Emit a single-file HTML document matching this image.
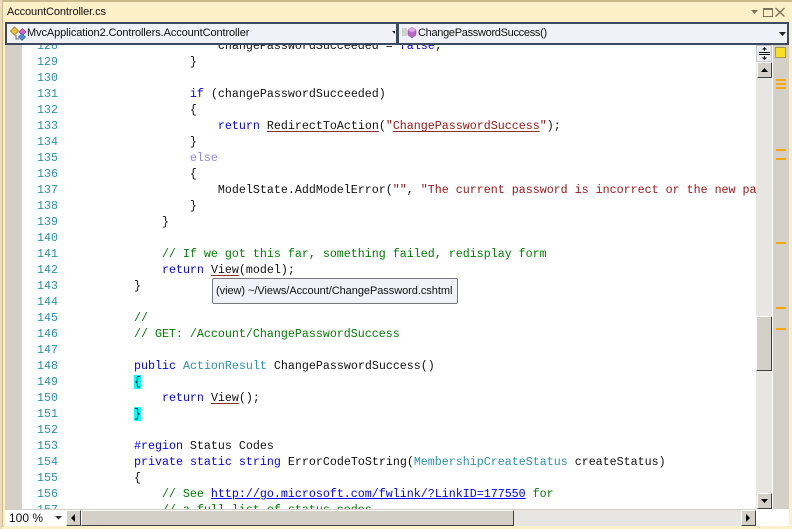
<!DOCTYPE html>
<html><head><meta charset="utf-8">
<style>
html,body{margin:0;padding:0}
body{width:792px;height:529px;position:relative;overflow:hidden;background:#fdf0c9;font-family:"Liberation Sans",sans-serif}
div{position:absolute;box-sizing:border-box}
.ui{font-size:11px;color:#111;white-space:pre;line-height:16px}
#code{left:22px;top:45px;width:734px;height:464px;background:#fff;overflow:hidden}
.l{position:absolute;left:0;height:16px;line-height:16px;white-space:pre;font-family:"Liberation Mono",monospace;font-size:11.67px;color:#111}
.n{left:15px;color:#2b91af}
.c{left:56px}
.k{color:#0000ff}.s{color:#a31515}.g{color:#008000}.t{color:#2b91af}
.d{color:#8a8aee}.u{text-decoration:underline;text-decoration-color:#8a3030;text-underline-offset:2px}.b{background:#00ffff}
.a{color:#0000ff;text-decoration:underline}
.btn{background:#d4d0c8;border:1px solid;border-color:#fff #404040 #404040 #fff}
.m{left:776px;width:10px;height:2px;background:#ffa500}
</style></head><body>
<div style="left:0;top:0;width:792px;height:2px;background:#c9b98e"></div>
<div style="left:0;top:0;width:2px;height:529px;background:#e8dcc0"></div>
<div style="left:2px;top:1px;width:1px;height:526px;background:#d2b98a"></div>
<div class="ui" style="left:7px;top:4px;letter-spacing:-.1px">AccountController.cs</div>

<svg style="position:absolute;left:750px;top:3px" width="42" height="18">
<path d="M1 7h7l-3.500 4z" fill="#7b7257"/>
<rect x="13.500" y="5.500" width="9" height="8" fill="none" stroke="#7b7257"/><rect x="13" y="5" width="10" height="2" fill="#7b7257"/>
<path d="M25.500 5l9 8.500M34.500 5l-9 8.500" stroke="#7b7257" stroke-width="1.400" fill="none"/>
</svg>

<div style="left:5px;top:22px;width:393px;height:23px;background:#f0f1f9;border:2px solid #3b4a5f"></div>
<div style="left:397px;top:22px;width:392px;height:23px;background:#f0f1f9;border:2px solid #3b4a5f"></div>
<svg style="position:absolute;left:10px;top:25px" width="18" height="18">
<path d="M.5 6l4-4 4 4-4 4z" fill="#eec33a" stroke="#a2801e" stroke-width=".8"/>
<path d="M6 10v4h3" stroke="#666" fill="none"/>
<path d="M9 7l3.500-3.500L16 7l-3.500 3.500z" fill="#d55fd5" stroke="#8a308a" stroke-width=".6"/>
<path d="M8.500 12l3.500-3.500 3.500 3.500-3.500 3.500z" fill="#4d8fd8" stroke="#265a96" stroke-width=".6"/>
</svg>
<div class="ui" style="left:27px;top:25px;letter-spacing:-.1px">MvcApplication2.Controllers.AccountController</div>
<svg style="position:absolute;left:392px;top:31px" width="4" height="5"><path d="M0 0h3v3z" fill="#222"/></svg>
<svg style="position:absolute;left:401px;top:25px" width="18" height="16">
<path d="M1 4h5M1 6h5M1 8h5M1 10h5" stroke="#b5b5a5"/>
<path d="M7 5l4-3 4 3v5l-4 3-4-3z" fill="#b866c8" stroke="#7a3c88" stroke-width=".5"/>
<path d="M7 5l4 2.500 4-2.500-4-3z" fill="#e0a8e8"/>
</svg>
<div class="ui" style="left:418px;top:25px;letter-spacing:-.3px">ChangePasswordSuccess()</div>
<svg style="position:absolute;left:779px;top:32px" width="10" height="5"><path d="M0 0h7l-3.500 4z" fill="#222"/></svg>

<div style="left:5px;top:45px;width:17px;height:464px;background:#d4d0c8"></div>
<div id="code">
<div class="l c" style="top:-7px">                    changePasswordSucceeded = <span class="k">false</span>;</div>
<div class="l n" style="top:-7px">128</div>
<div class="l n" style="top:9px">129</div><div class="l c" style="top:9px">                }</div>
<div class="l n" style="top:25px">130</div>
<div class="l n" style="top:41px">131</div><div class="l c" style="top:41px">                <span class="k">if</span> (changePasswordSucceeded)</div>
<div class="l n" style="top:57px">132</div><div class="l c" style="top:57px">                {</div>
<div class="l n" style="top:73px">133</div><div class="l c" style="top:73px">                    <span class="k">return</span> <span class="u">RedirectToAction</span>(<span class="s">"<span class="u">ChangePasswordSuccess</span>"</span>);</div>
<div class="l n" style="top:89px">134</div><div class="l c" style="top:89px">                }</div>
<div class="l n" style="top:105px">135</div><div class="l c" style="top:105px">                <span class="d">else</span></div>
<div class="l n" style="top:121px">136</div><div class="l c" style="top:121px">                {</div>
<div class="l n" style="top:137px">137</div><div class="l c" style="top:137px">                    ModelState.AddModelError(<span class="s">""</span>, <span class="s">"The current password is incorrect or the new password is invalid."</span>);</div>
<div class="l n" style="top:153px">138</div><div class="l c" style="top:153px">                }</div>
<div class="l n" style="top:169px">139</div><div class="l c" style="top:169px">            }</div>
<div class="l n" style="top:185px">140</div>
<div class="l n" style="top:201px">141</div><div class="l c g" style="top:201px">            // If we got this far, something failed, redisplay form</div>
<div class="l n" style="top:217px">142</div><div class="l c" style="top:217px">            <span class="k">return</span> <span class="u">View</span>(model);</div>
<div class="l n" style="top:233px">143</div><div class="l c" style="top:233px">        }</div>
<div class="l n" style="top:249px">144</div>
<div class="l n" style="top:265px">145</div><div class="l c g" style="top:265px">        //</div>
<div class="l n" style="top:281px">146</div><div class="l c g" style="top:281px">        // GET: /Account/ChangePasswordSuccess</div>
<div class="l n" style="top:297px">147</div>
<div class="l n" style="top:313px">148</div><div class="l c" style="top:313px">        <span class="k">public</span> <span class="t">ActionResult</span> ChangePasswordSuccess()</div>
<div class="l n" style="top:329px">149</div><div class="l c" style="top:329px">        <span class="b">{</span></div>
<div class="l n" style="top:345px">150</div><div class="l c" style="top:345px">            <span class="k">return</span> <span class="u">View</span>();</div>
<div class="l n" style="top:361px">151</div><div class="l c" style="top:361px">        <span class="b">}</span></div>
<div class="l n" style="top:377px">152</div>
<div class="l n" style="top:393px">153</div><div class="l c" style="top:393px">        <span class="k">#region</span> Status Codes</div>
<div class="l n" style="top:409px">154</div><div class="l c" style="top:409px">        <span class="k">private</span> <span class="k">static</span> <span class="k">string</span> ErrorCodeToString(<span class="t">MembershipCreateStatus</span> createStatus)</div>
<div class="l n" style="top:425px">155</div><div class="l c" style="top:425px">        {</div>
<div class="l n" style="top:441px">156</div><div class="l c g" style="top:441px">            // See <span class="a">http://go.microsoft.com/fwlink/?LinkID=177550</span> for</div>
<div class="l n" style="top:457px">157</div><div class="l c g" style="top:457px">            // a full list of status codes.</div>
</div>

<div style="left:212px;top:278px;width:246px;height:26px;background:#f0f1f9;border:1px solid #77787c;border-radius:2px"></div>
<div class="ui" style="left:216px;top:283px;letter-spacing:-.05px">(view) ~/Views/Account/ChangePassword.cshtml</div>

<div style="left:756px;top:45px;width:16px;height:464px;background:#e8e6e2"></div>
<div style="left:772px;top:45px;width:1px;height:464px;background:#fff"></div>
<div style="left:773px;top:45px;width:16px;height:464px;background:#d4d0c8"></div>
<div style="left:756px;top:45px;width:16px;height:17px;background:#ecedf3;border:1px solid #c8c8cc"></div>
<svg style="position:absolute;left:758px;top:47px" width="13" height="14"><path d="M1 5.500h11M1 7.500h11" stroke="#111"/><path d="M6.500 1v3M6.500 9v3" stroke="#111"/><path d="M6.500 0l2.500 2.500h-5zM6.500 13l2.500-2.500h-5z" fill="#111"/></svg>
<div class="btn" style="left:757px;top:62px;width:15px;height:16px"></div>
<svg style="position:absolute;left:761px;top:68px" width="8" height="5"><path d="M3.500 0l3.500 4h-7z" fill="#000"/></svg>
<div class="btn" style="left:756px;top:316px;width:16px;height:55px"></div>
<div class="btn" style="left:757px;top:493px;width:15px;height:16px"></div>
<svg style="position:absolute;left:761px;top:499px" width="8" height="5"><path d="M0 0h7l-3.500 4z" fill="#000"/></svg>
<div style="left:775px;top:47px;width:11px;height:11px;background:#f8e020;border:1px solid #a89a50"></div>
<div class="m" style="top:79px"></div><div class="m" style="top:83px"></div><div class="m" style="top:87px"></div>
<div class="m" style="top:149px"></div><div class="m" style="top:158px"></div><div class="m" style="top:242px"></div><div class="m" style="top:307px"></div><div class="m" style="top:328px"></div>

<div style="left:5px;top:509px;width:784px;height:17px;background:#fff"></div>
<div style="left:5px;top:509px;width:751px;height:1px;background:#d4d0c8"></div>
<div class="ui" style="left:9px;top:510px;font-size:12px">100 %</div>
<svg style="position:absolute;left:55px;top:516px" width="8" height="5"><path d="M0 0h7l-3.500 3.500z" fill="#333"/></svg>
<div style="left:66px;top:510px;width:675px;height:16px;background:#e8e6e2"></div>
<div class="btn" style="left:66px;top:510px;width:15px;height:16px"></div>
<svg style="position:absolute;left:71px;top:513px" width="6" height="10"><path d="M4 1v8l-4-4z" fill="#000"/></svg>
<div class="btn" style="left:81px;top:510px;width:433px;height:16px"></div>
<div class="btn" style="left:741px;top:510px;width:15px;height:16px"></div>
<svg style="position:absolute;left:746px;top:513px" width="6" height="10"><path d="M0 1v8l4-4z" fill="#000"/></svg>
</body></html>
